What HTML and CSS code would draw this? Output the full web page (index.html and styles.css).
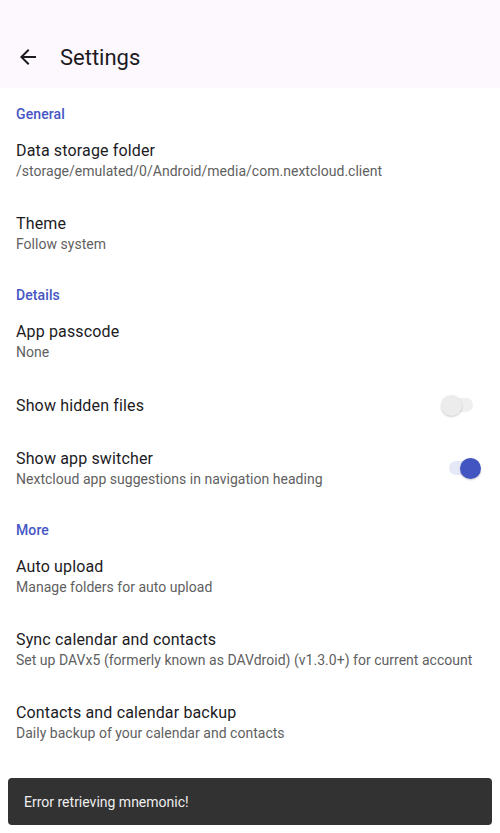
FILE: index.html
```html
<!DOCTYPE html>
<html lang="en">
<head>
  <meta charset="UTF-8">
  <meta name="viewport" content="width=device-width, initial-scale=1.0">
  <title>Settings</title>
  <link rel="stylesheet" href="styles.css">
</head>
<body>
  <header class="toolbar">
    <svg class="back" viewBox="0 0 24 24" width="24" height="24">
      <path d="M20 11H7.83l5.59-5.59L12 4l-8 8 8 8 1.41-1.41L7.83 13H20v-2z"/>
    </svg>
    <h1>Settings</h1>
  </header>

  <main class="prefs">
    <div class="category">General</div>
    <div class="pref">
      <div class="text">
        <div class="title">Data storage folder</div>
        <div class="summary">/storage/emulated/0/Android/media/com.nextcloud.client</div>
      </div>
    </div>
    <div class="pref">
      <div class="text">
        <div class="title">Theme</div>
        <div class="summary">Follow system</div>
      </div>
    </div>

    <div class="category">Details</div>
    <div class="pref">
      <div class="text">
        <div class="title">App passcode</div>
        <div class="summary">None</div>
      </div>
    </div>
    <div class="pref single">
      <div class="text">
        <div class="title">Show hidden files</div>
      </div>
      <div class="switch"><span class="track"></span><span class="thumb"></span></div>
    </div>
    <div class="pref">
      <div class="text">
        <div class="title">Show app switcher</div>
        <div class="summary">Nextcloud app suggestions in navigation heading</div>
      </div>
      <div class="switch on"><span class="track"></span><span class="thumb"></span></div>
    </div>

    <div class="category">More</div>
    <div class="pref">
      <div class="text">
        <div class="title">Auto upload</div>
        <div class="summary">Manage folders for auto upload</div>
      </div>
    </div>
    <div class="pref">
      <div class="text">
        <div class="title">Sync calendar and contacts</div>
        <div class="summary">Set up DAVx5 (formerly known as DAVdroid) (v1.3.0+) for current account</div>
      </div>
    </div>
    <div class="pref">
      <div class="text">
        <div class="title">Contacts and calendar backup</div>
        <div class="summary">Daily backup of your calendar and contacts</div>
      </div>
    </div>
  </main>

  <div class="snackbar">Error retrieving mnemonic!</div>
</body>
</html>
```

FILE: styles.css
```css
body {
  margin: 0;
  padding: 0;
  font-family: Roboto, 'Noto Sans', sans-serif;
  background: #fff;
  color: #1f1f1f;
  height: 833px;
  overflow: hidden;
}

.toolbar {
  height: 88px;
  background: #fcf8fd;
  display: flex;
  align-items: center;
  padding: 26px 16px 0;
  box-sizing: border-box;
}

.toolbar .back {
  fill: #1c1b1f;
  margin-right: 20px;
}

.toolbar h1 {
  margin: 0;
  font-size: 22px;
  font-weight: 400;
  color: #1c1b1f;
}

.prefs {
  padding-top: 1px;
}

.category {
  padding: 16px 16px 0;
  font-size: 14px;
  line-height: 19px;
  font-weight: 500;
  letter-spacing: 0.1px;
  color: #4556c4;
}

.pref {
  display: flex;
  align-items: center;
  padding: 16px;
  min-height: 73px;
  box-sizing: border-box;
}

.pref.single {
  min-height: 54px;
  padding-top: 0;
  padding-bottom: 0;
}

.pref .text {
  flex: 1;
}

.title {
  font-size: 16px;
  line-height: 21px;
  letter-spacing: 0.15px;
  color: #1c1b1f;
}

.summary {
  font-size: 14px;
  line-height: 20px;
  letter-spacing: 0.02px;
  color: #5f5f5f;
}

.switch {
  position: relative;
  width: 40px;
  height: 21px;
  margin-left: 12px;
  margin-right: 3px;
}

.switch .track {
  position: absolute;
  left: 8px;
  top: 3px;
  width: 24px;
  height: 14px;
  border-radius: 7px;
  background: #efefef;
}

.switch .thumb {
  position: absolute;
  left: 0;
  top: 0;
  width: 21px;
  height: 21px;
  border-radius: 50%;
  background: #ececec;
  box-shadow: 0 1px 2px rgba(0, 0, 0, 0.2);
}

.switch.on .track {
  background: #e5e8f6;
}

.switch.on .thumb {
  left: 19px;
  background: #4355c0;
}

.snackbar {
  position: fixed;
  left: 8px;
  right: 8px;
  top: 778px;
  height: 47px;
  box-sizing: border-box;
  padding: 0 16px;
  display: flex;
  align-items: center;
  background: #323232;
  color: #eeeeee;
  font-size: 14px;
  border-radius: 4px;
}
```
